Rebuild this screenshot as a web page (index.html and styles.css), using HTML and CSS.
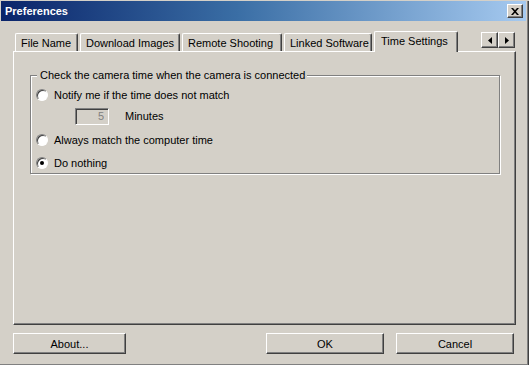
FILE: index.html
```html
<!DOCTYPE html>
<html lang="en">
<head>
    <meta charset="UTF-8">
    <meta name="viewport" content="width=device-width, initial-scale=1.0">
    <title>Preferences</title>
    <link rel="stylesheet" href="styles.css">
</head>
<body>
    <div class="window">
        <div class="titlebar">
            <span class="title">Preferences</span>
            <button type="button" class="close-btn" aria-label="Close">
                <svg width="8" height="7" viewBox="0 0 8 7">
                    <path d="M0 0h2l2 2.3L6 0h2L5 3.5 8 7H6L4 4.7 2 7H0l3-3.5z" fill="#000"/>
                </svg>
            </button>
        </div>

        <div class="dialog-body">
            <div class="tabbar">
                <div class="tab tab-file">File Name</div>
                <div class="tab tab-download">Download Images</div>
                <div class="tab tab-remote">Remote Shooting</div>
                <div class="tab tab-linked">Linked Software</div>
                <div class="tab tab-time active">Time Settings</div>
                <div class="tab-scroll">
                    <button type="button" class="scroll-btn" aria-label="Previous">
                        <svg width="4" height="7" viewBox="0 0 4 7"><path d="M4 0v7L0 3.5z" fill="#000"/></svg>
                    </button>
                    <button type="button" class="scroll-btn" aria-label="Next">
                        <svg width="4" height="7" viewBox="0 0 4 7"><path d="M0 0v7l4-3.5z" fill="#000"/></svg>
                    </button>
                </div>
            </div>

            <div class="panel">
                <fieldset class="group">
                    <legend>Check the camera time when the camera is connected</legend>

                    <div class="option">
                        <span class="radio"></span>
                        <span>Notify me if the time does not match</span>
                    </div>

                    <div class="minutes-row">
                        <input type="text" class="num-input" value="5" disabled>
                        <span>Minutes</span>
                    </div>

                    <div class="option option-always">
                        <span class="radio"></span>
                        <span>Always match the computer time</span>
                    </div>

                    <div class="option option-nothing">
                        <span class="radio checked"></span>
                        <span>Do nothing</span>
                    </div>
                </fieldset>
            </div>

            <div class="buttons">
                <button type="button" class="btn btn-about">About...</button>
                <button type="button" class="btn btn-ok">OK</button>
                <button type="button" class="btn">Cancel</button>
            </div>
        </div>
    </div>
</body>
</html>
```

FILE: styles.css
```css
* {
    margin: 0;
    padding: 0;
    box-sizing: border-box;
}

body {
    font-family: 'Liberation Sans', Arial, sans-serif;
    font-size: 11px;
    color: #000;
    background: #d4d0c8;
}

button,
input {
    font-family: inherit;
    font-size: inherit;
}

.window {
    width: 529px;
    height: 365px;
    background: #d4d0c8;
    border-right: 1px solid #404040;
    border-bottom: 1px solid #404040;
    box-shadow: inset -1px -1px 0 #808080;
}

/* title bar */

.titlebar {
    height: 20px;
    margin: 1px 2px 0 1px;
    padding: 0 3px 0 4px;
    display: flex;
    align-items: center;
    justify-content: space-between;
    background: linear-gradient(90deg, #0a246a 0%, #3a6ea5 45%, #a6caf0 100%);
}

.title {
    color: #fff;
    font-weight: bold;
}

.close-btn {
    width: 16px;
    height: 14px;
    display: flex;
    align-items: center;
    justify-content: center;
    background: #d4d0c8;
    border: 1px solid;
    border-color: #fff #404040 #404040 #fff;
    box-shadow: inset -1px -1px 0 #808080;
}

/* tabs */

.dialog-body {
    padding: 10px 12px 0 13px;
}

.tabbar {
    height: 20px;
    padding-left: 2px;
    display: flex;
    align-items: flex-end;
    gap: 2px;
    position: relative;
    z-index: 1;
}

.tab {
    height: 18px;
    padding: 0 5px;
    display: flex;
    align-items: center;
    white-space: nowrap;
    border-top: 1px solid #fff;
    border-left: 1px solid #fff;
    border-right: 1px solid #404040;
    border-radius: 2px 2px 0 0;
    box-shadow: inset -1px 0 0 #808080;
}

.tab-file { width: 63px; }
.tab-download { width: 100px; }
.tab-remote { width: 100px; }
.tab-linked { width: 88px; }

.tab.active {
    width: 84px;
    height: 21px;
    margin-bottom: -1px;
    padding-left: 6px;
    align-items: flex-start;
    padding-top: 3px;
    background: #d4d0c8;
}

.tab-scroll {
    margin-left: auto;
    margin-right: 1px;
    align-self: flex-start;
    margin-top: 1px;
    display: flex;
}

.scroll-btn {
    width: 17px;
    height: 16px;
    display: flex;
    align-items: center;
    justify-content: center;
    background: #d4d0c8;
    border: 1px solid;
    border-color: #fff #404040 #404040 #fff;
    box-shadow: inset -1px -1px 0 #808080;
}

/* panel */

.panel {
    height: 274px;
    padding: 17px 15px 0 16px;
    border: 1px solid;
    border-color: #fff #404040 #404040 #fff;
    box-shadow: inset -1px -1px 0 #808080;
}

.group {
    height: 105px;
    padding: 6px 5px 0 4px;
    border: 1px solid #808080;
    box-shadow: 1px 1px 0 #fff, inset 1px 1px 0 #fff;
}

.group legend {
    padding: 0 2px 0 3px;
    margin-left: 2px;
    line-height: 13px;
    background: #d4d0c8;
}

.option {
    height: 14px;
    display: flex;
    align-items: center;
    gap: 6px;
}

.radio {
    width: 12px;
    height: 12px;
    margin-left: 1px;
    border-radius: 50%;
    background: #fff;
    border: 1px solid;
    border-color: #808080 #fff #fff #808080;
    box-shadow: inset 1px 1px 0 #404040;
    display: flex;
    align-items: center;
    justify-content: center;
}

.radio.checked::after {
    content: '';
    width: 4px;
    height: 4px;
    border-radius: 50%;
    background: #000;
}

.minutes-row {
    margin: 5px 0 0 40px;
    height: 18px;
    display: flex;
    align-items: center;
    gap: 16px;
}

.num-input {
    width: 34px;
    height: 17px;
    padding-right: 4px;
    text-align: right;
    color: #808080;
    background: #d4d0c8;
    border: 1px solid;
    border-color: #808080 #fff #fff #808080;
    box-shadow: inset 1px 1px 0 #404040;
}

.option-always {
    margin-top: 8px;
}

.option-nothing {
    margin-top: 9px;
}

/* bottom buttons */

.buttons {
    margin-top: 8px;
    padding-right: 2px;
    display: flex;
    gap: 12px;
}

.btn {
    width: 118px;
    height: 21px;
    background: #d4d0c8;
    border: 1px solid;
    border-color: #fff #404040 #404040 #fff;
    box-shadow: inset -1px -1px 0 #808080;
}

.btn-about {
    width: 113px;
}

.btn-ok {
    margin-left: auto;
}
```
